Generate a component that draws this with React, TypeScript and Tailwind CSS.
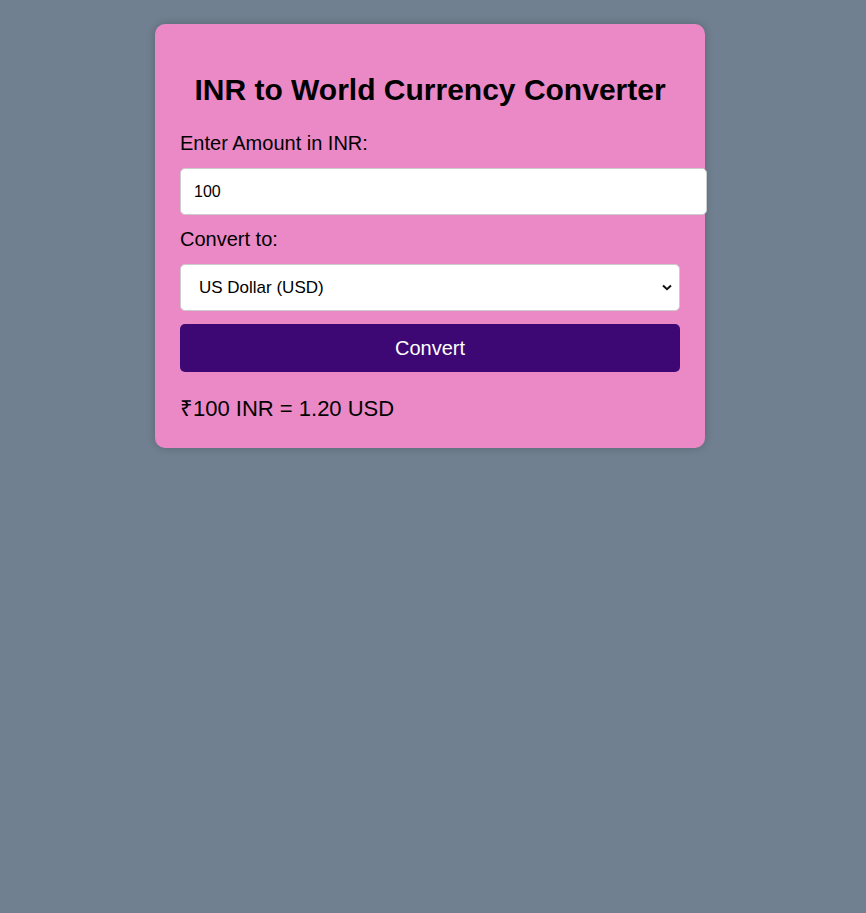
import { useState } from "react";

const rates: Record<string, { label: string; rate: number }> = {
  USD: { label: "US Dollar (USD)", rate: 0.012 },
  EUR: { label: "Euro (EUR)", rate: 0.011 },
  GBP: { label: "British Pound (GBP)", rate: 0.0095 },
  JPY: { label: "Japanese Yen (JPY)", rate: 1.8 },
};

export default function App() {
  const [amount, setAmount] = useState("100");
  const [currency, setCurrency] = useState("USD");
  const [result, setResult] = useState("₹100 INR = 1.20 USD");

  const convert = () => {
    const value = parseFloat(amount) || 0;
    setResult(`₹${value} INR = ${(value * rates[currency].rate).toFixed(2)} ${currency}`);
  };

  return (
    <div className="flex min-h-[913px] justify-center bg-[#708090] pt-[24px] pr-[6px] font-['Liberation_Sans',Arial,sans-serif] text-black">
      <div className="h-fit w-[550px] rounded-[10px] bg-[#eb89c6] px-[25px] pt-[49px] pb-[27px] shadow-[0_0_10px_rgba(0,0,0,0.2)]">
        <h2 className="text-center text-[30px] leading-[34px] font-bold">
          INR to World Currency Converter
        </h2>

        <label className="mt-[25px] block text-[20px] leading-[23px]">Enter Amount in INR:</label>
        <input
          type="number"
          value={amount}
          onChange={(e) => setAmount(e.target.value)}
          className="mt-[13px] block h-[47px] w-[527px] rounded-[5px] border border-[#ccc] bg-white px-[13px] text-[16px] outline-none"
        />

        <label className="mt-[13px] block text-[20px] leading-[23px]">Convert to:</label>
        <div className="relative mt-[13px]">
          <select
            value={currency}
            onChange={(e) => setCurrency(e.target.value)}
            className="block h-[47px] w-full appearance-none rounded-[5px] border border-[#ccc] bg-white pl-[18px] text-[17px] outline-none"
          >
            {Object.entries(rates).map(([code, r]) => (
              <option key={code} value={code}>
                {r.label}
              </option>
            ))}
          </select>
          <svg
            className="pointer-events-none absolute top-[20px] right-[8px]"
            width="10"
            height="7"
            viewBox="0 0 10 7"
            fill="none"
          >
            <path d="M1 1.5 L5 5.2 L9 1.5" stroke="#111" strokeWidth="2" />
          </svg>
        </div>

        <button
          type="button"
          onClick={convert}
          className="mt-[13px] block h-[48px] w-full cursor-pointer rounded-[5px] bg-[#3e0874] text-[20px] text-white"
        >
          Convert
        </button>

        <p className="mt-[24px] text-[22px] leading-[25px]">{result}</p>
      </div>
    </div>
  );
}
